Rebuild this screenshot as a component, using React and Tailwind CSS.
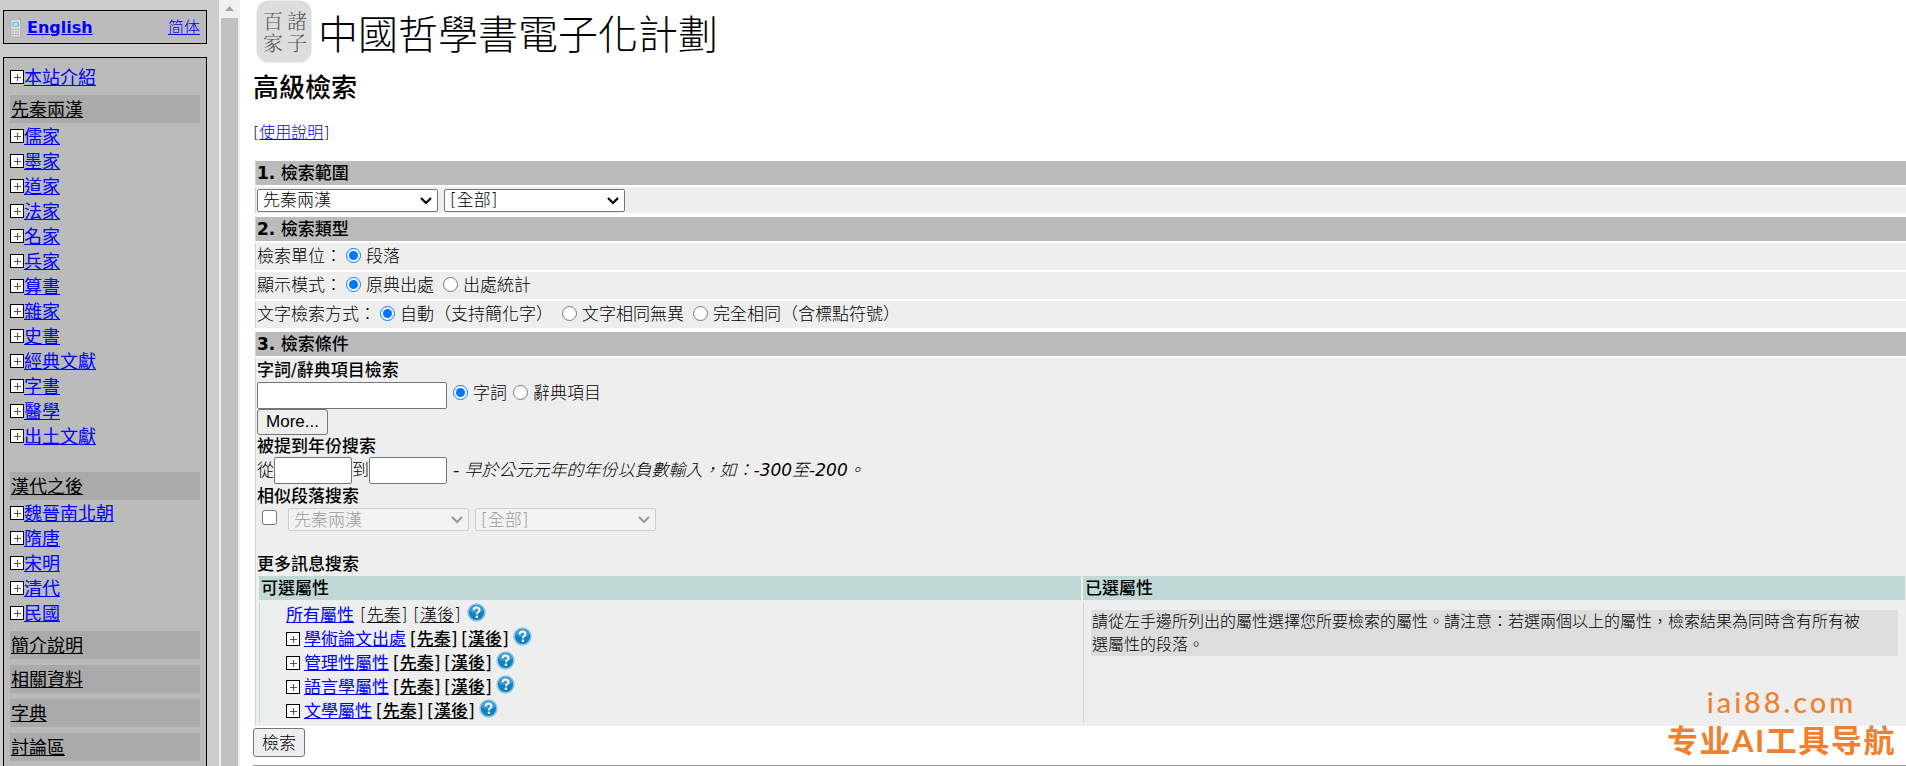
import React, { useState } from 'react';

const PRE_QIN = ['儒家', '墨家', '道家', '法家', '名家', '兵家', '算書', '雜家', '史書', '經典文獻', '字書', '醫學', '出土文獻'];
const POST_HAN = ['魏晉南北朝', '隋唐', '宋明', '清代', '民國'];
const SECTIONS = ['簡介說明', '相關資料', '字典', '討論區'];
const ATTRIBUTES = ['學術論文出處', '管理性屬性', '語言學屬性', '文學屬性'];

const PlusIcon = () => (
    <svg className="w-[14px] h-[14px] shrink-0" viewBox="0 0 14 14" shapeRendering="crispEdges" aria-hidden="true">
        <rect width="14" height="14" fill="#000" />
        <rect x="1" y="1" width="12" height="12" fill="#fff" />
        <path d="M4 7h7v1H4z M7 4h1v7H7z" fill="#555" />
    </svg>
);

const PhoneIcon = () => (
    <svg className="w-3 h-5 shrink-0" viewBox="0 0 12 20" aria-hidden="true">
        <rect x="9" y="0" width="1.6" height="5" fill="#aaa" />
        <rect x="1" y="1.5" width="9.5" height="17.5" rx="1.5" fill="#dcdcdc" stroke="#a8a8a8" strokeWidth=".6" />
        <rect x="2.5" y="4" width="6.5" height="5" fill="#6fc4f0" />
        <rect x="4" y="5" width="3.5" height="3" fill="#b4e3fa" />
        <path d="M2.5 11H4v1H2.5z M5 11h1.5v1H5z M7.5 11H9v1H7.5z M2.5 13.500H4v1H2.5z M5 13.500h1.5v1H5z M7.5 13.500H9v1H7.5z M2.5 16H4v1H2.5z M5 16h1.5v1H5z M7.5 16H9v1H7.5z" fill="#999" />
    </svg>
);

const HelpIcon = () => (
    <svg className="w-[19px] h-[19px] shrink-0" viewBox="0 0 19 19" aria-hidden="true">
        <circle cx="9.5" cy="9.5" r="9.2" fill="#8cc4e2" />
        <circle cx="9.5" cy="9.5" r="7.6" fill="#0f80c1" />
        <path d="M2.500 8a7.100 7.100 0 0 1 14 0c-4 2.500-10 2.500-14 0z" fill="#3a9cd3" />
        <path d="M6.600 7.300c0-3.700 5.900-3.700 5.900-.2 0 2.200-2.600 2.100-2.600 4.100" fill="none" stroke="#fff" strokeWidth="2" />
        <rect x="8.8" y="12.6" width="2.2" height="2.2" fill="#fff" />
    </svg>
);

const NavItem = ({ label }) => (
    <li className="flex items-center h-[25px] pt-px">
        <PlusIcon />
        <a href="#" className="text-[#0000ff] underline">{label}</a>
    </li>
);

const NavHeading = ({ label, className = '' }) => (
    <h2 className={`flex items-center h-7 bg-[#aaa] px-px ${className}`}>
        <a href="#" className="text-black underline">{label}</a>
    </h2>
);

const Sidebar = () => (
    <aside className="flex shrink-0 bg-[#ccc] overflow-hidden">
        <div className="w-[219px] pl-[3px] pr-3 pt-[10px]">
            <div className="flex items-center h-[34px] border border-black bg-[#bbb] px-[6px] pt-px">
                <PhoneIcon />
                <a href="#" className="ml-[5px] font-['DejaVu_Sans'] font-bold text-[16px] text-[#0000ff] underline">English</a>
                <a href="#" className="ml-auto font-light text-[16px] text-[#0000ff] underline">简体</a>
            </div>
            <nav className="mt-[13px] h-full border border-black bg-[#bbb] p-[6px] text-[18px] leading-[25px]">
                <ul><NavItem label="本站介紹" /></ul>
                <NavHeading label="先秦兩漢" className="mt-[6px]" />
                <ul>
                    {PRE_QIN.map(label => <NavItem key={label} label={label} />)}
                </ul>
                <NavHeading label="漢代之後" className="mt-6" />
                <ul>
                    {POST_HAN.map(label => <NavItem key={label} label={label} />)}
                </ul>
                {SECTIONS.map(label => <NavHeading key={label} label={label} className="mt-[6px]" />)}
            </nav>
        </div>
        {/* Frame scrollbar */}
        <div className="flex flex-col items-center w-[21px] bg-[#f1f1f1] pr-px">
            <svg className="w-[9px] h-[5px] mt-[6px] mb-[7px] shrink-0" viewBox="0 0 9 5" aria-hidden="true">
                <path d="M4.500 0L9 5H0z" fill="#a3a3a3" />
            </svg>
            <div className="flex-1 w-[17px] bg-[#c1c1c1]" />
        </div>
    </aside>
);

const Logo = () => (
    <svg className="w-14 h-[63px] shrink-0" viewBox="0 0 56 63" role="img" aria-label="諸子百家">
        <rect x=".5" y=".5" width="55" height="62" rx="12" fill="#ddd" />
        <g fill="#555" fontSize="20" fontFamily="'Noto Serif CJK TC', 'Noto Sans CJK TC', serif" fontWeight="300">
            <text x="7" y="29">百</text>
            <text x="31" y="29">諸</text>
            <text x="7" y="51">家</text>
            <text x="31" y="51">子</text>
        </g>
    </svg>
);

const BarHeading = ({ number, children }) => (
    <h3 className="h-6 border-l border-[#c1d9d6] bg-[#bbb] px-px leading-6 font-medium">
        <b className="font-bold">{number}.</b> {children}
    </h3>
);

const Row = ({ children }) => (
    <div className="flex items-center min-h-[26px] border-l border-[#c1d9d6] bg-[#eee] px-px">{children}</div>
);

const Radio = ({ name, label, checked, onChange }) => (
    <label className="flex items-center gap-[5px]">
        <input type="radio" name={name} checked={checked} onChange={onChange} className="w-[15px] h-[15px] mb-1" />
        {label}
    </label>
);

const RadioRow = ({ name, title, options }) => {
    const [value, setValue] = useState(options[0]);
    return (
        <Row>
            <div role="radiogroup" aria-label={title} className="flex items-center h-[27px] pt-px">
                <span className="mr-1">{title}：</span>
                <div className="flex items-center gap-[9px]">
                    {options.map(option => (
                        <Radio key={option} name={name} label={option} checked={value === option} onChange={() => setValue(option)} />
                    ))}
                </div>
            </div>
        </Row>
    );
};

const Select = ({ label, disabled, children }) => (
    <div className="relative w-[181px]">
        <select aria-label={label} disabled={disabled}
            className="peer block appearance-none w-full h-[23px] border border-[#767676] rounded-[2px] bg-white disabled:bg-[#f2f2f2] disabled:border-[#cecece] disabled:text-[#999] disabled:opacity-100 pl-[5px] text-[17px] leading-5">
            {children}
        </select>
        <svg className="absolute right-[6px] top-2 w-3 h-2 text-black peer-disabled:text-[#999] pointer-events-none" viewBox="0 0 12 8" fill="none" stroke="currentColor" strokeWidth="2.2" aria-hidden="true">
            <path d="M1 1l5 5 5-5" />
        </svg>
    </div>
);

const ScopeSelects = ({ prefix, disabled }) => (
    <div className="flex gap-[6px]">
        <Select label={`${prefix}時代`} disabled={disabled}>
            <option>先秦兩漢</option>
        </Select>
        <Select label={`${prefix}範圍`} disabled={disabled}>
            <option>[全部]</option>
        </Select>
    </div>
);

const EraLinks = () => (
    <>
        <span>[<a href="#" className="underline">先秦</a>]</span>
        <span>[<a href="#" className="underline">漢後</a>]</span>
    </>
);

const Help = () => (
    <a href="#" aria-label="說明" className="mb-[6px]"><HelpIcon /></a>
);

const SearchForm = () => {
    const [field, setField] = useState('字詞');

    return (
        <form className="text-[17px]" onSubmit={(e) => e.preventDefault()}>
            <div className="flex flex-col gap-1 pl-[2px]">
                <section className="flex flex-col gap-[2px]">
                    <BarHeading number={1}>檢索範圍</BarHeading>
                    <Row><ScopeSelects prefix="檢索" /></Row>
                </section>

                <section className="flex flex-col gap-[2px]">
                    <BarHeading number={2}>檢索類型</BarHeading>
                    <RadioRow name="unit" title="檢索單位" options={['段落']} />
                    <RadioRow name="mode" title="顯示模式" options={['原典出處', '出處統計']} />
                    <RadioRow name="match" title="文字檢索方式" options={['自動（支持簡化字）', '文字相同無異', '完全相同（含標點符號）']} />
                </section>

                <section className="flex flex-col gap-[2px]">
                    <BarHeading number={3}>檢索條件</BarHeading>
                    <div className="border-l border-[#c1d9d6] bg-[#eee] pb-[3px]">
                        <div className="pl-px">
                            <h4 className="font-medium leading-6">字詞/辭典項目檢索</h4>
                            <div className="flex">
                                <input type="text" aria-label="字詞" className="w-[190px] h-[27px] border border-[#767676] rounded-[2px] bg-white px-1" />
                                <div className="flex items-center gap-[6px] ml-[6px] h-6">
                                    {['字詞', '辭典項目'].map(option => (
                                        <Radio key={option} name="field" label={option} checked={field === option} onChange={() => setField(option)} />
                                    ))}
                                </div>
                            </div>
                            <button type="button" className="block w-[71px] h-[26px] border border-[#767676] rounded-[3px] bg-[#efefef] font-['Liberation_Sans'] font-normal text-[17px] leading-6">More...</button>

                            <h4 className="font-medium leading-[22px]">被提到年份搜索</h4>
                            <div className="flex items-center">
                                <label htmlFor="year-from">從</label>
                                <input id="year-from" type="text" className="w-[78px] h-[27px] border border-[#767676] rounded-[2px] bg-white px-1" />
                                <label htmlFor="year-to">到</label>
                                <input id="year-to" type="text" className="w-[78px] h-[27px] border border-[#767676] rounded-[2px] bg-white px-1" />
                                <i className="ml-[6px]">- 早於公元元年的年份以負數輸入，如：-300至-200。</i>
                            </div>

                            <h4 className="font-medium leading-6">相似段落搜索</h4>
                            <div className="flex items-center">
                                <input type="checkbox" aria-label="相似段落搜索" className="w-[15px] h-[15px] ml-[5px] mr-[11px] mb-1" />
                                <ScopeSelects prefix="相似段落" disabled />
                            </div>

                            <h4 className="mt-[21px] font-medium leading-6">更多訊息搜索</h4>
                        </div>

                        <div className="grid grid-cols-2 gap-x-[2px] pl-[3px] pr-px">
                            <section className="flex flex-col gap-[2px]">
                                <h5 className="h-6 bg-[#c1d9d6] px-[2px] leading-6 font-medium">可選屬性</h5>
                                <ul className="flex-1 border-l border-[#c1d9d6] pl-[26px] pt-px leading-6">
                                    <li className="flex items-center h-6 gap-[6px]">
                                        <a href="#" className="text-[#0000ff] font-normal underline">所有屬性</a>
                                        <EraLinks />
                                        <Help />
                                    </li>
                                    {ATTRIBUTES.map(label => (
                                        <li key={label} className="flex items-center h-6 gap-1 font-medium">
                                            <PlusIcon />
                                            <a href="#" className="text-[#0000ff] font-normal underline">{label}</a>
                                            <EraLinks />
                                            <Help />
                                        </li>
                                    ))}
                                </ul>
                            </section>
                            <section className="flex flex-col gap-[2px]">
                                <h5 className="h-6 bg-[#c1d9d6] px-[2px] leading-6 font-medium">已選屬性</h5>
                                <div className="flex-1 border-l border-[#c1d9d6] px-[7px] py-2">
                                    <p className="bg-[#ddd] pl-px pr-6 text-[16px] leading-[23px]">
                                        請從左手邊所列出的屬性選擇您所要檢索的屬性。請注意：若選兩個以上的屬性，檢索結果為同時含有所有被選屬性的段落。
                                    </p>
                                </div>
                            </section>
                        </div>
                    </div>
                </section>
            </div>
            <button type="submit" className="block mt-[2px] w-[52px] h-[29px] border border-[#767676] rounded-[3px] bg-[#efefef] text-[17px] leading-6">檢索</button>
        </form>
    );
};

const App = () => (
    <div lang="zh-Hant" className="flex h-screen overflow-hidden bg-white text-black font-['DejaVu_Sans','Noto_Sans_CJK_TC',sans-serif]">
        <Sidebar />
        <main className="flex-1 min-w-0 pl-[13px] font-light">
            <header className="flex items-center gap-[6px] pl-[3px]">
                <Logo />
                <h1 className="pt-[6px] text-[40px] leading-[56px] font-light">中國哲學書電子化計劃</h1>
            </header>
            <h2 className="mt-[9px] text-[26px] leading-8 font-medium">高級檢索</h2>
            <p className="mt-[17px] mb-4 text-[16px] leading-6">[<a href="#" className="text-[#0000ff] underline">使用說明</a>]</p>
            <SearchForm />
            <hr className="mt-2 border-t border-[#999]" />
        </main>

        {/* Site stamp over the page corner */}
        <div className="absolute right-[10px] bottom-[6px] flex flex-col items-center text-[#f08030] font-['Lato','Noto_Sans_CJK_SC',sans-serif]">
            <span className="text-[29px] leading-9 font-medium tracking-widest">iai88.com</span>
            <span lang="zh-Hans" className="text-[31px] leading-10 font-bold tracking-wider">专业AI工具导航</span>
        </div>
    </div>
);

export default App;
